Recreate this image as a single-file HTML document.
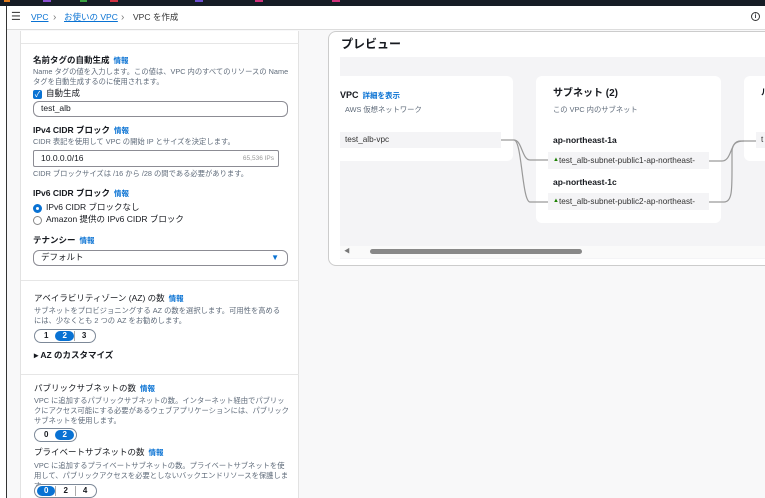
<!DOCTYPE html>
<html><head><meta charset="utf-8"><style>
*{box-sizing:border-box;margin:0;padding:0}
body{width:765px;height:498px;overflow:hidden;background:#f8f8f9;font-family:"Liberation Sans","Noto Sans CJK JP",sans-serif;color:#16191f;position:relative;line-height:1.15}
.a{position:absolute;white-space:nowrap}
.lnk{color:#0972d3;font-size:7.5px;font-weight:bold;margin-left:4px}
.t{font-size:8.5px;font-weight:bold}
.d{font-size:7.3px;color:#5f6b7a;line-height:10px;white-space:normal}
.inp{position:absolute;border:1px solid #8c8c94;border-radius:6px;background:#fff;font-size:8.5px;padding-left:7px;display:flex;align-items:center}
.seg{position:absolute;height:14px;border:1px solid #7d8998;border-radius:8px;display:flex;align-items:center;font-size:8px;font-weight:bold;background:#fff;padding:0 2px}
.seg span{padding:0 7px;line-height:10px;border-left:1px solid #aaa}
.seg span:first-child{border-left:none}
.seg .on{background:#0972d3;color:#fff;border-radius:7px;border:none}
.card{position:absolute;background:#fff;border-radius:6px}
.box{position:absolute;background:#f4f4f6;font-size:8.2px;color:#333;padding-left:5px;display:flex;align-items:center;white-space:nowrap;overflow:hidden}
</style></head><body>
<div class="a" style="left:0;top:0;width:765px;height:6px;background:#161d26"></div>
<div class="a" style="left:4px;top:0;width:6px;height:2px;background:#e07b1c"></div>
<div class="a" style="left:43px;top:0;width:8px;height:2px;background:#8a4ed0"></div>
<div class="a" style="left:80px;top:0;width:7px;height:2px;background:#3aa040"></div>
<div class="a" style="left:110px;top:0;width:8px;height:2px;background:#d03040"></div>
<div class="a" style="left:195px;top:0;width:8px;height:2px;background:#6b4ed0"></div>
<div class="a" style="left:255px;top:0;width:8px;height:2px;background:#d0307a"></div>
<div class="a" style="left:332px;top:0;width:8px;height:2px;background:#d0307a"></div>
<div class="a" style="left:0;top:6px;width:6px;height:492px;background:#fff"></div>
<div class="a" style="left:6px;top:6px;width:1px;height:492px;background:#333"></div>
<div class="a" style="left:7px;top:6px;width:758px;height:24px;background:#fff;border-bottom:1px solid #ddd"></div>
<div class="a" style="left:11px;top:11px;font-size:11px;color:#444">☰</div>
<div class="a" style="left:31px;top:13px;font-size:8.5px;color:#0972d3;text-decoration:underline">VPC</div>
<div class="a" style="left:53px;top:12px;font-size:10px;color:#777">›</div>
<div class="a" style="left:64px;top:13px;font-size:8.5px;color:#0972d3;text-decoration:underline">お使いの VPC</div>
<div class="a" style="left:121px;top:12px;font-size:10px;color:#777">›</div>
<div class="a" style="left:133px;top:13px;font-size:8.5px;color:#333">VPC を作成</div>
<div class="a" style="left:751px;top:12px;width:9px;height:9px;border:1px solid #333;border-radius:50%;font-size:6px;text-align:center;line-height:8px;font-weight:bold">i</div>
<div class="a" style="left:7px;top:31px;width:14px;height:467px;background:#f8f8f9;border-right:1px solid #e2e2e2"></div>
<div class="a" style="left:21px;top:31px;width:278px;height:467px;background:#fff;border-right:1px solid #e2e2e2"></div>
<div class="a" style="left:21px;top:43px;width:278px;height:1px;background:#e6e6e6"></div>
<div class="a" style="left:21px;top:280px;width:278px;height:1px;background:#e6e6e6"></div>
<div class="a" style="left:21px;top:374px;width:278px;height:1px;background:#e6e6e6"></div>

<div class="a t" style="left:33px;top:56px">名前タグの自動生成<span class="lnk">情報</span></div>
<div class="a d" style="left:33px;top:67px;width:258px">Name タグの値を入力します。この値は、VPC 内のすべてのリソースの Name タグを自動生成するのに使用されます。</div>
<div class="a" style="left:33px;top:90px;width:9px;height:9px;background:#0972d3;border-radius:2px;color:#fff;font-size:8px;line-height:9px;text-align:center">✓</div>
<div class="a" style="left:46px;top:89px;font-size:8.5px">自動生成</div>
<div class="inp" style="left:33px;top:101px;width:255px;height:16px">test_alb</div>

<div class="a t" style="left:33px;top:126px">IPv4 CIDR ブロック<span class="lnk">情報</span></div>
<div class="a d" style="left:33px;top:137px">CIDR 表記を使用して VPC の開始 IP とサイズを決定します。</div>
<div class="inp" style="left:33px;top:150px;width:246px;height:17px;border-radius:2px">10.0.0.0/16<span style="position:absolute;right:4px;font-size:6.5px;color:#999">65,536 IPs</span></div>
<div class="a d" style="left:33px;top:169px">CIDR ブロックサイズは /16 から /28 の間である必要があります。</div>

<div class="a t" style="left:33px;top:189px">IPv6 CIDR ブロック<span class="lnk">情報</span></div>
<div class="a" style="left:33px;top:204px;width:9px;height:9px;border:3px solid #0972d3;border-radius:50%"></div>
<div class="a" style="left:46px;top:203px;font-size:8.5px">IPv6 CIDR ブロックなし</div>
<div class="a" style="left:33px;top:216px;width:9px;height:9px;border:1px solid #888;border-radius:50%"></div>
<div class="a" style="left:46px;top:215px;font-size:8.5px">Amazon 提供の IPv6 CIDR ブロック</div>
<div class="a t" style="left:33px;top:236px">テナンシー<span class="lnk">情報</span></div>
<div class="inp" style="left:33px;top:250px;width:255px;height:16px">デフォルト<span style="position:absolute;right:8px;color:#0972d3;font-size:8px">▼</span></div>

<div class="a" style="left:34px;top:294px;font-size:8.5px">アベイラビリティゾーン (AZ) の数<span class="lnk">情報</span></div>
<div class="a d" style="left:34px;top:306px;width:250px">サブネットをプロビジョニングする AZ の数を選択します。可用性を高めるには、少なくとも 2 つの AZ をお勧めします。</div>
<div class="seg" style="left:34px;top:329px"><span>1</span><span class="on">2</span><span>3</span></div>
<div class="a t" style="left:34px;top:351px">▸ AZ のカスタマイズ</div>

<div class="a" style="left:34px;top:384px;font-size:8.5px">パブリックサブネットの数<span class="lnk">情報</span></div>
<div class="a d" style="left:34px;top:396px;width:256px">VPC に追加するパブリックサブネットの数。インターネット経由でパブリックにアクセス可能にする必要があるウェブアプリケーションには、パブリックサブネットを使用します。</div>
<div class="seg" style="left:34px;top:428px"><span>0</span><span class="on">2</span></div>
<div class="a" style="left:34px;top:448px;font-size:8.5px">プライベートサブネットの数<span class="lnk">情報</span></div>
<div class="a d" style="left:34px;top:461px;width:256px">VPC に追加するプライベートサブネットの数。プライベートサブネットを使用して、パブリックアクセスを必要としないバックエンドリソースを保護します。</div>
<div class="seg" style="left:34px;top:484px"><span class="on">0</span><span>2</span><span>4</span></div>

<div class="a" style="left:328px;top:31px;width:450px;height:235px;background:#fff;border:1px solid #ccc;border-radius:8px"></div>
<div class="a" style="left:341px;top:38px;font-size:12px;font-weight:bold">プレビュー</div>
<div class="a" style="left:340px;top:57px;width:425px;height:202px;background:#f4f4f6"></div>
<div class="card" style="left:340px;top:76px;width:173px;height:85px;border-radius:0 6px 6px 0"></div>
<div class="a t" style="left:340px;top:90px;font-size:9px">VPC<span class="lnk">詳細を表示</span></div>
<div class="a d" style="left:345px;top:105px">AWS 仮想ネットワーク</div>
<div class="box" style="left:340px;top:132px;width:161px;height:16px">test_alb-vpc</div>
<div class="card" style="left:536px;top:76px;width:185px;height:147px"></div>
<div class="a" style="left:553px;top:88px;font-size:10px;font-weight:bold">サブネット (2)</div>
<div class="a d" style="left:553px;top:105px">この VPC 内のサブネット</div>
<div class="a t" style="left:553px;top:136px">ap-northeast-1a</div>
<div class="box" style="left:548px;top:152px;width:161px;height:17px"><span style="color:#1d8102;font-size:6px">▲</span>test_alb-subnet-public1-ap-northeast-</div>
<div class="a t" style="left:553px;top:178px">ap-northeast-1c</div>
<div class="box" style="left:548px;top:193px;width:161px;height:17px"><span style="color:#1d8102;font-size:6px">▲</span>test_alb-subnet-public2-ap-northeast-</div>
<div class="card" style="left:744px;top:76px;width:30px;height:85px"></div>
<div class="a t" style="left:761px;top:88px">ル</div>
<div class="box" style="left:756px;top:132px;width:20px;height:16px">t</div>
<svg class="a" style="left:500px;top:130px" width="260" height="90" fill="none" stroke="#9a9a9a" stroke-width="1.2">
<path d="M1 10 H14 C22 10 22 30 30 30 H48"/>
<path d="M14 10 C22 10 22 72 30 72 H48"/>
<path d="M209 31 H222 C232 31 230 11 240 11 H256"/>
<path d="M209 72 H224 C232 72 232 60 232 40 V22 C232 14 236 11 244 11"/>
</svg>
<div class="a" style="left:340px;top:246px;width:425px;height:12px;background:#fafafa"></div>
<div class="a" style="left:344px;top:249px;font-size:6px;color:#777">◀</div>
<div class="a" style="left:370px;top:249px;width:212px;height:5px;background:#888;border-radius:3px"></div>
</body></html>
